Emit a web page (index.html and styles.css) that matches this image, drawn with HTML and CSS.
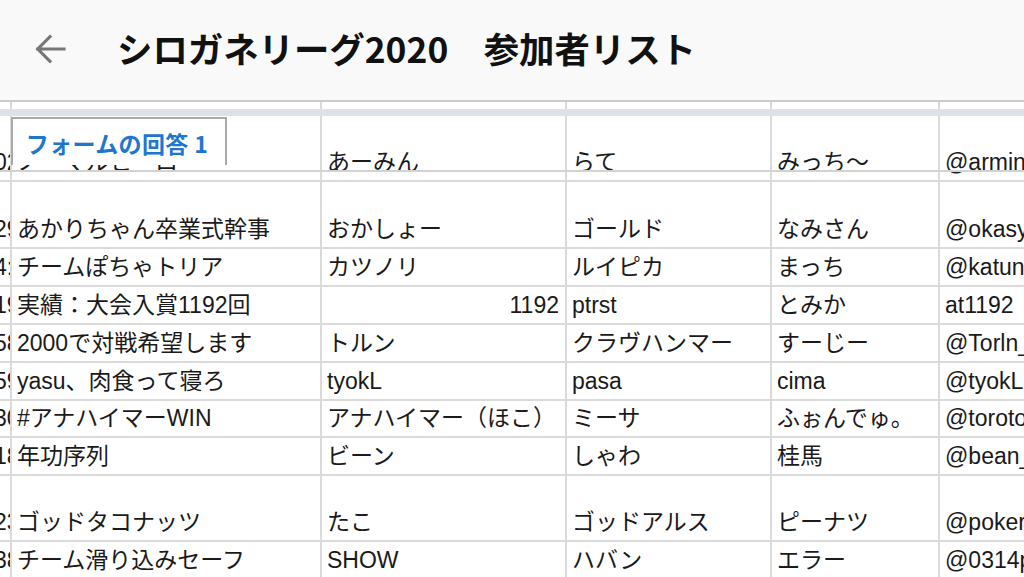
FILE: index.html
```html
<!DOCTYPE html>
<html lang="ja">
<head>
<meta charset="utf-8">
<title>シロガネリーグ2020 参加者リスト</title>
<link rel="stylesheet" href="styles.css">
</head>
<body>
<header class="topbar">
  <svg class="back" viewBox="0 0 24 24" width="42" height="42" aria-hidden="true">
    <path d="M20 12H5M12 5l-7 7 7 7" fill="none" stroke="#777" stroke-width="1.8" stroke-linecap="square"/>
  </svg>
  <h1 class="title">シロガネリーグ2020　参加者リスト</h1>
</header>
<main class="sheet">
  <div class="grid">
    <div class="cell strip"></div><div class="cell strip"></div><div class="cell strip"></div><div class="cell strip"></div><div class="cell strip"></div><div class="cell strip"></div>
    <div class="band"></div>

    <div class="cell c0 tall"><span>02</span></div><div class="cell tall">ノーマルヒーロー</div><div class="cell tall">あーみん</div><div class="cell tall">らて</div><div class="cell tall">みっち〜</div><div class="cell tall">@armin_</div>

    <div class="cell c0 tall2"><span>29</span></div><div class="cell tall2">あかりちゃん卒業式幹事</div><div class="cell tall2">おかしょー</div><div class="cell tall2">ゴールド</div><div class="cell tall2">なみさん</div><div class="cell tall2">@okasyo</div>

    <div class="cell c0"><span>4:</span></div><div class="cell">チームぽちゃトリア</div><div class="cell">カツノリ</div><div class="cell">ルイピカ</div><div class="cell">まっち</div><div class="cell">@katunori</div>

    <div class="cell c0"><span>19</span></div><div class="cell">実績：大会入賞1192回</div><div class="cell num">1192</div><div class="cell">ptrst</div><div class="cell">とみか</div><div class="cell">at1192</div>

    <div class="cell c0"><span>58</span></div><div class="cell">2000で対戦希望します</div><div class="cell">トルン</div><div class="cell">クラヴハンマー</div><div class="cell">すーじー</div><div class="cell">@Torln_</div>

    <div class="cell c0"><span>59</span></div><div class="cell">yasu、肉食って寝ろ</div><div class="cell">tyokL</div><div class="cell">pasa</div><div class="cell">cima</div><div class="cell">@tyokL</div>

    <div class="cell c0 short"><span>30</span></div><div class="cell short">#アナハイマーWIN</div><div class="cell short">アナハイマー（ほこ）</div><div class="cell short">ミーサ</div><div class="cell short">ふぉんでゅ。</div><div class="cell short">@torotoro</div>

    <div class="cell c0"><span>18</span></div><div class="cell">年功序列</div><div class="cell">ビーン</div><div class="cell">しゃわ</div><div class="cell">桂馬</div><div class="cell">@bean_</div>

    <div class="cell c0 tall"><span>23</span></div><div class="cell tall">ゴッドタコナッツ</div><div class="cell tall">たこ</div><div class="cell tall">ゴッドアルス</div><div class="cell tall">ピーナツ</div><div class="cell tall">@poker</div>

    <div class="cell c0"><span>38</span></div><div class="cell">チーム滑り込みセーフ</div><div class="cell">SHOW</div><div class="cell">ハバン</div><div class="cell">エラー</div><div class="cell">@0314p</div>
  </div>
  <div class="tabline"></div>
  <div class="tab">フォームの回答 1</div>
</main>
</body>
</html>
```

FILE: styles.css
```css
html, body {
  margin: 0;
  padding: 0;
  width: 1024px;
  height: 577px;
  overflow: hidden;
  background: #ffffff;
}

.topbar {
  height: 100px;
  background: #f9f9f9;
  border-bottom: 2px solid #cbcbcb;
  display: flex;
  align-items: center;
  padding-left: 29px;
  box-sizing: content-box;
}

.back {
  display: block;
  flex: none;
  margin-bottom: 2px;
}

.title {
  margin: 0 0 4px 46px;
  font-family: "Noto Sans CJK JP", sans-serif;
  font-weight: 700;
  font-size: 35.4px;
  line-height: 44px;
  color: #111111;
  white-space: nowrap;
}

.sheet {
  position: relative;
}

.grid {
  display: grid;
  grid-template-columns: 12px 310px 245px 205px 168px 200px;
  font-family: "Liberation Sans", "Noto Sans CJK JP", sans-serif;
  font-size: 23px;
  color: #1a1a1a;
}

.cell {
  height: 38px;
  box-sizing: border-box;
  border-right: 2px solid #dadada;
  border-bottom: 2px solid #dadada;
  display: flex;
  align-items: flex-end;
  padding: 0 6px 3px 5px;
  line-height: 30px;
  white-space: nowrap;
  overflow: hidden;
}

.cell.short {
  height: 37px;
}

.cell.tall {
  height: 66px;
}

.cell.tall2 {
  height: 67px;
}

.cell.strip {
  height: 7px;
  border-bottom: none;
  padding: 0;
}

.band {
  grid-column: 1 / -1;
  height: 7px;
  background: #dde1e8;
}

.cell.c0 {
  padding: 0 0 3px 0;
}

.cell.c0 span {
  margin-left: -6px;
}

.cell.num {
  justify-content: flex-end;
}

.tabline {
  position: absolute;
  left: 0;
  right: 0;
  top: 68px;
  height: 2px;
  background: #d2d2d2;
}

.tab {
  position: absolute;
  left: 11px;
  top: 15px;
  width: 216px;
  height: 48px;
  box-sizing: border-box;
  background: #ffffff;
  border: 2px solid #a9a9a9;
  border-bottom: none;
  display: flex;
  align-items: center;
  justify-content: center;
  padding: 1px 4px 0 0;
  font-family: "Noto Sans CJK JP", sans-serif;
  font-weight: 700;
  font-size: 23px;
  letter-spacing: 0.4px;
  color: #1d77cf;
  white-space: nowrap;
}
```
